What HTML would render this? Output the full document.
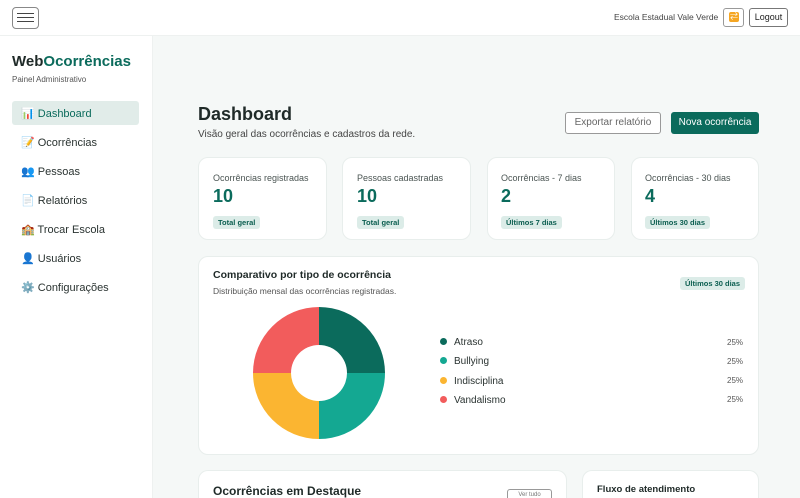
<!DOCTYPE html>
<html style="overflow:hidden;height:498px"><head><meta charset="utf-8"><style>
*{box-sizing:border-box;margin:0;padding:0}
body{width:800px;height:498px;overflow:hidden;background:#f5f8f7;font-family:"Liberation Sans","Noto Sans CJK SC",sans-serif;color:#1f2a28;position:relative}
.a{position:absolute}
.top{left:0;top:0;width:800px;height:36px;background:#fff;border-bottom:1px solid #eef1f0}
.side{left:0;top:36px;width:153px;height:462px;background:#fff;border-right:1px solid #eef1f0}
.nav{position:absolute;left:12px;width:127px;height:24px;font-size:11px;color:#2a3331;padding:6px 0 0 9px;border-radius:3px}
.card{background:#fff;border:1px solid #e8eeec;border-radius:10px}
.lbl{font-size:9px;color:#4a5452}
.num{font-size:18px;font-weight:bold;color:#0b6b5c}
.badge{font-size:7.5px;font-weight:bold;color:#0b5e50;background:#dcece8;border-radius:3px;padding:2px 5px;display:inline-block}
.leg{font-size:10px;color:#2a3331}
.dot{width:7px;height:7px;border-radius:50%;display:inline-block}
.pct{font-size:8px;color:#555}
</style></head><body>
<div class="a top"></div>
<div class="a" style="left:12px;top:7px;width:27px;height:22px;border:1px solid #888;border-radius:4px;background:#fff"></div>
<div class="a" style="left:17px;top:13px;width:17px;height:1px;background:#444;box-shadow:0 4px 0 #444,0 8px 0 #444"></div>
<div class="a" style="left:614px;top:12px;font-size:8.5px;color:#444">Escola Estadual Vale Verde</div>
<div class="a" style="left:723px;top:8px;width:21px;height:19px;border:1px solid #999;border-radius:3px;background:#fff"></div>
<div class="a" style="left:729px;top:12px;width:10px;height:10px;background:#f5a623;border-radius:2px;color:#fff;font-size:8px;line-height:10px;text-align:center">⇄</div>
<div class="a" style="left:749px;top:8px;width:39px;height:19px;border:1px solid #777;border-radius:3px;font-size:9px;line-height:17px;text-align:center;color:#222">Logout</div>

<div class="a side"></div>
<div class="a" style="left:12px;top:53px;font-size:15px;font-weight:bold;color:#1f2a28">Web<span style="color:#0b6b5c">Ocorrências</span></div>
<div class="a" style="left:12px;top:75px;font-size:8px;color:#555">Painel Administrativo</div>
<div class="nav" style="top:101px;background:#e1ece9;color:#0b6b5c">📊 Dashboard</div>
<div class="nav" style="top:130px">📝 Ocorrências</div>
<div class="nav" style="top:159px">👥 Pessoas</div>
<div class="nav" style="top:188px">📄 Relatórios</div>
<div class="nav" style="top:217px">🏫 Trocar Escola</div>
<div class="nav" style="top:246px">👤 Usuários</div>
<div class="nav" style="top:275px">⚙️ Configurações</div>

<div class="a" style="left:198px;top:104px;font-size:18px;font-weight:bold">Dashboard</div>
<div class="a" style="left:198px;top:129px;font-size:10px;color:#444">Visão geral das ocorrências e cadastros da rede.</div>
<div class="a" style="left:565px;top:112px;width:96px;height:22px;border:1px solid #999;border-radius:3px;background:#fff;font-size:10px;color:#666;text-align:center;line-height:20px">Exportar relatório</div>
<div class="a" style="left:671px;top:112px;width:88px;height:22px;border-radius:3px;background:#0b6b5c;font-size:10px;color:#fff;text-align:center;line-height:22px">Nova ocorrência</div>

<div class="a card" style="left:198px;top:157px;width:129px;height:83px;padding:15px 14px"><div class="lbl">Ocorrências registradas</div><div class="num" style="margin:3px 0 5px">10</div><span class="badge">Total geral</span></div>
<div class="a card" style="left:342px;top:157px;width:129px;height:83px;padding:15px 14px"><div class="lbl">Pessoas cadastradas</div><div class="num" style="margin:3px 0 5px">10</div><span class="badge">Total geral</span></div>
<div class="a card" style="left:487px;top:157px;width:128px;height:83px;padding:15px 13px"><div class="lbl">Ocorrências - 7 dias</div><div class="num" style="margin:3px 0 5px">2</div><span class="badge">Últimos 7 dias</span></div>
<div class="a card" style="left:631px;top:157px;width:128px;height:83px;padding:15px 13px"><div class="lbl">Ocorrências - 30 dias</div><div class="num" style="margin:3px 0 5px">4</div><span class="badge">Últimos 30 dias</span></div>

<div class="a card" style="left:198px;top:256px;width:561px;height:199px"></div>
<div class="a" style="left:213px;top:269px;font-size:10.5px;font-weight:bold">Comparativo por tipo de ocorrência</div>
<div class="a" style="left:213px;top:286px;font-size:8.5px;color:#555">Distribuição mensal das ocorrências registradas.</div>
<div class="a badge" style="left:680px;top:277px">Últimos 30 dias</div>
<svg class="a" style="left:253px;top:307px" width="132" height="132" viewBox="0 0 132 132">
<path d="M66 0A66 66 0 0 1 132 66L66 66Z" fill="#0b6b5c"/>
<path d="M132 66A66 66 0 0 1 66 132L66 66Z" fill="#14a892"/>
<path d="M66 132A66 66 0 0 1 0 66L66 66Z" fill="#fbb531"/>
<path d="M0 66A66 66 0 0 1 66 0L66 66Z" fill="#f25c5c"/>
<circle cx="66" cy="66" r="28" fill="#fff"/>
</svg>
<div class="a dot" style="left:440px;top:338px;background:#0b6b5c"></div><div class="a leg" style="left:454px;top:337px">Atraso</div><div class="a pct" style="left:727px;top:338px">25%</div>
<div class="a dot" style="left:440px;top:357px;background:#14a892"></div><div class="a leg" style="left:454px;top:356px">Bullying</div><div class="a pct" style="left:727px;top:357px">25%</div>
<div class="a dot" style="left:440px;top:377px;background:#fbb531"></div><div class="a leg" style="left:454px;top:376px">Indisciplina</div><div class="a pct" style="left:727px;top:376px">25%</div>
<div class="a dot" style="left:440px;top:396px;background:#f25c5c"></div><div class="a leg" style="left:454px;top:395px">Vandalismo</div><div class="a pct" style="left:727px;top:395px">25%</div>

<div class="a card" style="left:198px;top:470px;width:369px;height:28px;border-bottom:none;border-radius:10px 10px 0 0"></div>
<div class="a" style="left:213px;top:484px;font-size:12px;font-weight:bold">Ocorrências em Destaque</div>
<div class="a" style="left:507px;top:489px;width:45px;height:9px;border:1px solid #999;border-bottom:none;border-radius:3px 3px 0 0;background:#fff;font-size:6px;color:#777;text-align:center;padding-top:2px">Ver tudo</div>
<div class="a card" style="left:582px;top:470px;width:177px;height:28px;border-bottom:none;border-radius:10px 10px 0 0"></div>
<div class="a" style="left:597px;top:484px;font-size:9.5px;font-weight:bold">Fluxo de atendimento</div>
</body></html>
